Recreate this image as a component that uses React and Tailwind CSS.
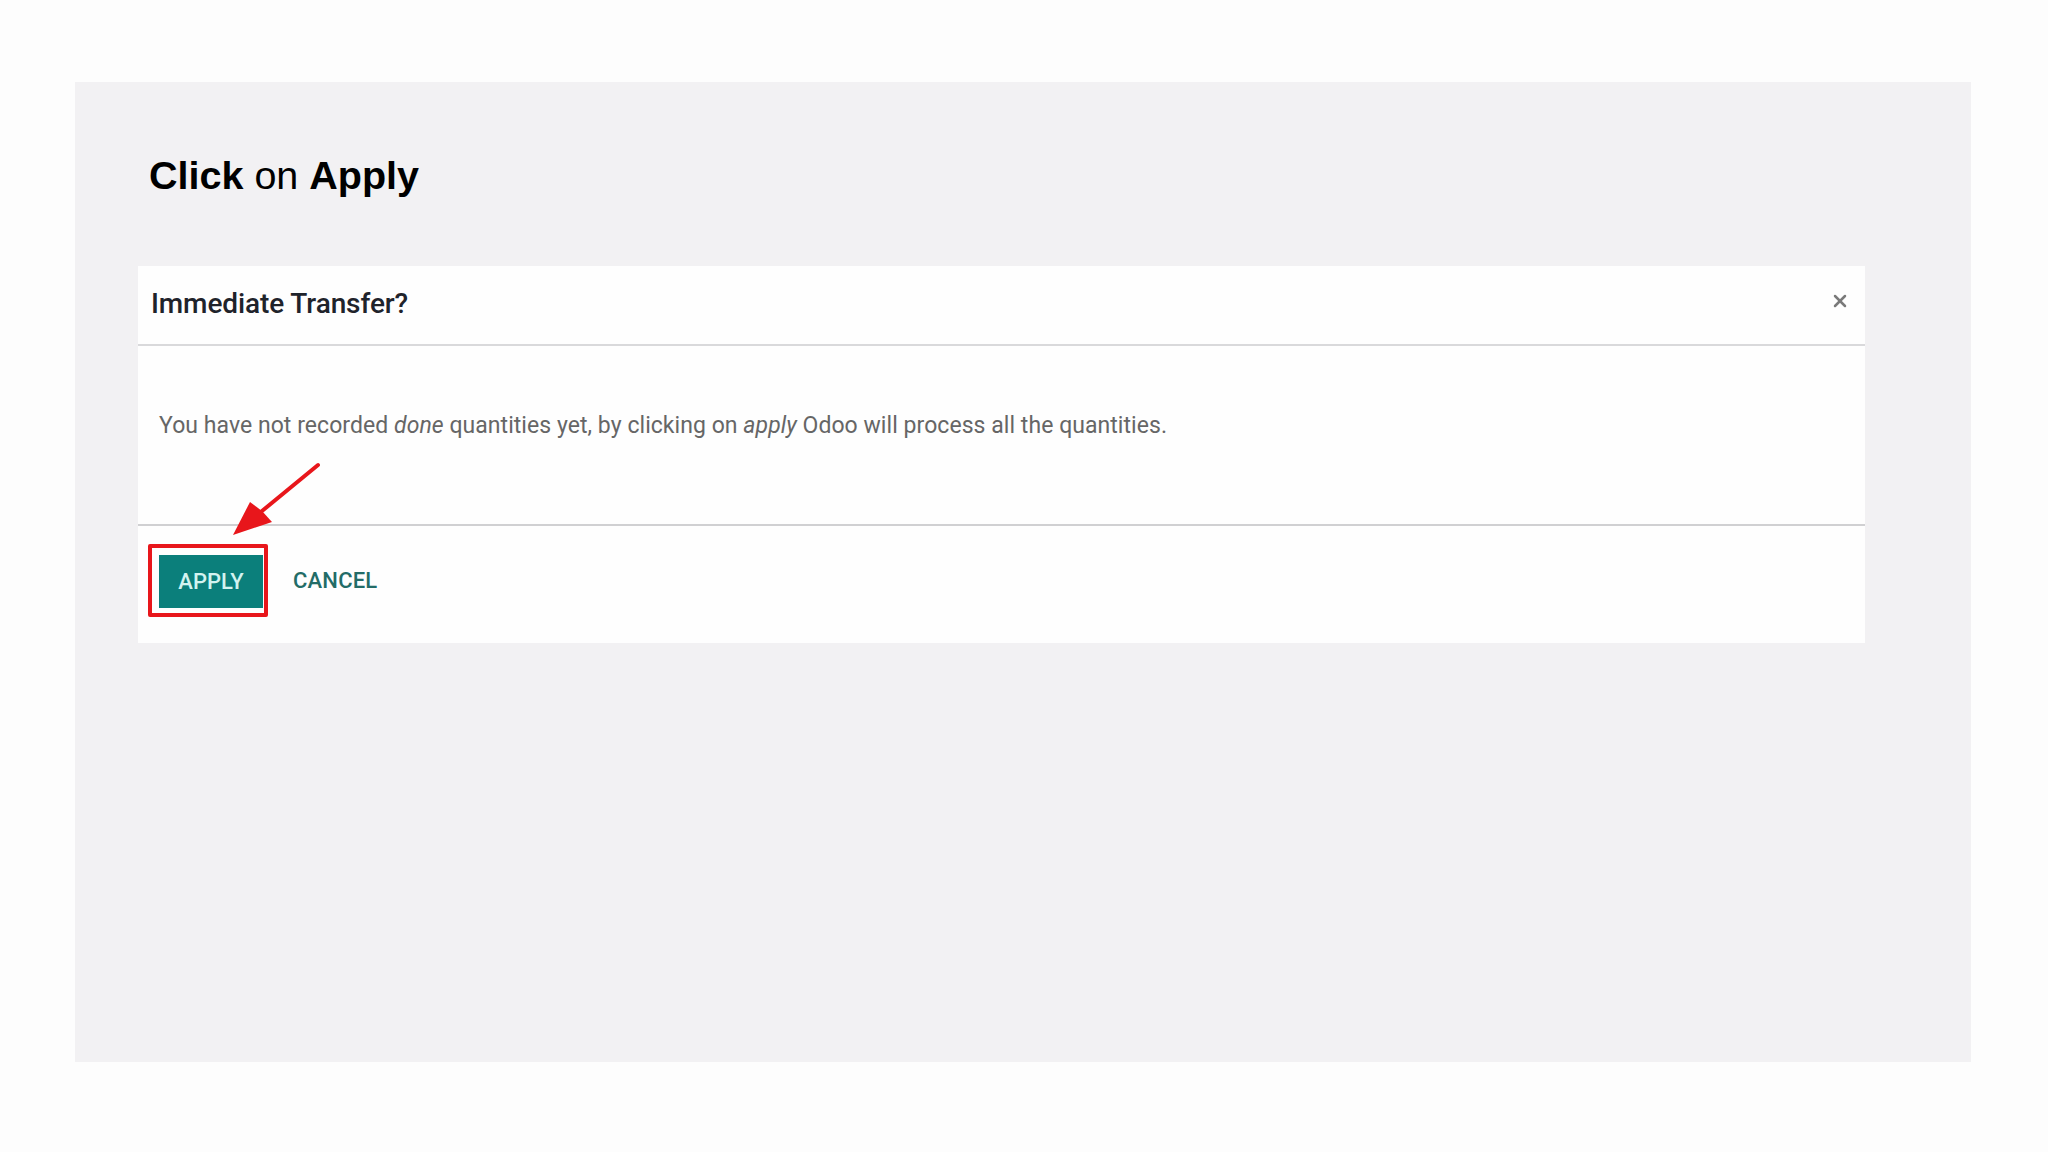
import { X } from 'lucide-react';

function Arrow() {
  return (
    <svg
      className="absolute left-[80px] top-[185px] w-[120px] h-[100px] pointer-events-none"
      viewBox="0 0 120 100"
    >
      <line x1="100" y1="14" x2="44" y2="60" stroke="#e8161b" strokeWidth="4" strokeLinecap="round" />
      <polygon points="15,84 32,51 44,60 54,71" fill="#e8161b" />
    </svg>
  );
}

export default function App() {
  return (
    <div className="w-[2048px] h-[1152px] bg-[#fdfdfd] pt-[82px] pl-[75px]">
      <div className="w-[1896px] h-[980px] bg-[#f2f1f3] pt-[73px] pl-[63px]">
        <h1 className="pl-[11px] text-[39.5px] leading-[40px] text-black font-['Liberation_Sans',Arial,sans-serif]">
          <span className="font-bold">Click</span> on <span className="font-bold">Apply</span>
        </h1>

        <div className="relative mt-[71px] w-[1727px] bg-[#fefefe] font-['Roboto',sans-serif]">
          <div className="h-[80px] flex items-center justify-between pl-[13px] pr-[15px] pb-[2px] border-b-2 border-[#d9d9db]">
            <div className="text-[28px] font-medium text-[#1f232b] tracking-[-0.1px]">Immediate Transfer?</div>
            <X size={20} strokeWidth={3} className="text-[#7a7a7a] mb-[6px]" />
          </div>

          <div className="h-[178px] pt-[65px] pl-[21px] text-[23px] leading-[30px] tracking-[0.05px] text-[#666666]">
            You have not recorded <em>done</em> quantities yet, by clicking on <em>apply</em> Odoo will process all the quantities.
          </div>

          <div className="h-[119px] border-t-2 border-[#d0d0d2] flex items-center pl-[10px] pb-[8px]">
            <div className="border-4 border-[#e8161b] pl-[7px] pr-[1px] pt-[7px] pb-[5px] rounded-[2px]">
              <button className="block w-[104px] h-[53px] bg-[#0b7f7b] text-[#d3f3f0] text-[22px] font-medium">
                APPLY
              </button>
            </div>
            <button className="ml-[25px] text-[22px] font-medium text-[#236c67] tracking-[0.2px]">CANCEL</button>
          </div>

          <Arrow />
        </div>
      </div>
    </div>
  );
}
